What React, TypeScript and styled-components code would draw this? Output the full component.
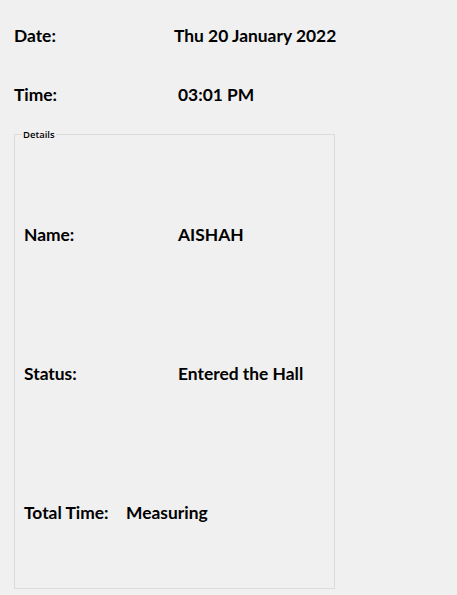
import React from "react";
import styled, { createGlobalStyle } from "styled-components";

const Global = createGlobalStyle`
  html, body {
    margin: 0;
    padding: 0;
    background: #f0f0f0;
  }
  body {
    font-family: Lato, "Open Sans", "Liberation Sans", sans-serif;
    color: #000;
  }
`;

const Page = styled.div`
  width: 457px;
  height: 595px;
  box-sizing: border-box;
  padding: 20px 0 0 14px;
  display: flex;
  flex-direction: column;
`;

const TopRows = styled.div`
  display: flex;
  flex-direction: column;
  gap: 29px;
`;

const Row = styled.div`
  display: flex;
  align-items: center;
  height: 30px;
  font-size: 17.4px;
  font-weight: 700;
  white-space: nowrap;
`;

const Label = styled.span<{ $w: number }>`
  width: ${(p) => p.$w}px;
  flex: none;
`;

const Value = styled.span``;

const Group = styled.fieldset`
  margin: 20px 0 0 0;
  padding: 0;
  width: 321px;
  height: 460px;
  box-sizing: border-box;
  border: 1px solid #dcdcdc;
  min-width: 0;
`;

const Legend = styled.legend`
  margin-left: 7px;
  padding: 0 1px;
  font-family: "Open Sans", "Liberation Sans", Arial, sans-serif;
  font-size: 9.5px;
  line-height: 11px;
  font-weight: 600;
  color: #000;
`;

const GroupBody = styled.div`
  display: flex;
  flex-direction: column;
  gap: 109px;
  padding: 79px 0 0 9px;
`;

export default function App() {
  return (
    <>
      <Global />
      <Page>
        <TopRows>
          <Row>
            <Label $w={160}>Date:</Label>
            <Value>Thu 20 January 2022</Value>
          </Row>
          <Row>
            <Label $w={164}>Time:</Label>
            <Value>03:01 PM</Value>
          </Row>
        </TopRows>
        <Group>
          <Legend>Details</Legend>
          <GroupBody>
            <Row>
              <Label $w={154}>Name:</Label>
              <Value>AISHAH</Value>
            </Row>
            <Row>
              <Label $w={154}>Status:</Label>
              <Value>Entered the Hall</Value>
            </Row>
            <Row>
              <Label $w={102}>Total Time:</Label>
              <Value>Measuring</Value>
            </Row>
          </GroupBody>
        </Group>
      </Page>
    </>
  );
}
